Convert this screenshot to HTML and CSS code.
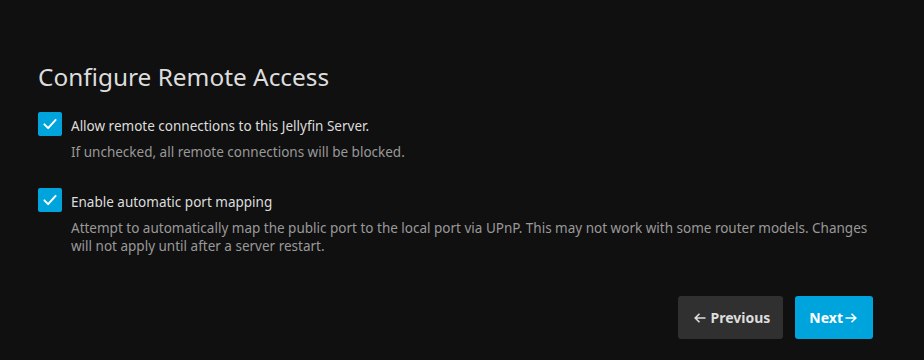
FILE: index.html
```html
<!DOCTYPE html>
<html lang="en">
<head>
    <meta charset="UTF-8">
    <title>Configure Remote Access</title>
    <link rel="stylesheet" href="styles.css">
</head>
<body>
    <div class="wizard">
        <h1>Configure Remote Access</h1>

        <div class="check-item">
            <label class="check-row">
                <span class="box">
                    <svg viewBox="0 0 24 24" width="18" height="18"><path d="M4.5 12.5l5 5 10-11" fill="none" stroke="#fff" stroke-width="2.6" stroke-linecap="round" stroke-linejoin="round"/></svg>
                </span>
                <span class="label">Allow remote connections to this Jellyfin Server.</span>
            </label>
            <div class="help">If unchecked, all remote connections will be blocked.</div>
        </div>

        <div class="check-item">
            <label class="check-row">
                <span class="box">
                    <svg viewBox="0 0 24 24" width="18" height="18"><path d="M4.5 12.5l5 5 10-11" fill="none" stroke="#fff" stroke-width="2.6" stroke-linecap="round" stroke-linejoin="round"/></svg>
                </span>
                <span class="label">Enable automatic port mapping</span>
            </label>
            <div class="help">Attempt to automatically map the public port to the local port via UPnP. This may not work with some router models. Changes will not apply until after a server restart.</div>
        </div>

        <div class="buttons">
            <button class="btn btn-prev">
                <svg class="arrow" viewBox="0 0 12 10" width="12" height="10"><path d="M11.5 5H1M5.5 0.8L1.2 5l4.3 4.2" fill="none" stroke="currentColor" stroke-width="1.6"/></svg>
                Previous
            </button>
            <button class="btn btn-next">
                Next
                <svg class="arrow" viewBox="0 0 12 10" width="12" height="10"><path d="M0.5 5H11M6.5 0.8L10.8 5l-4.3 4.2" fill="none" stroke="currentColor" stroke-width="1.6"/></svg>
            </button>
        </div>
    </div>
</body>
</html>
```

FILE: styles.css
```css
html, body {
    margin: 0;
    background: #101010;
    color: #ddd;
    font-family: "Noto Sans", sans-serif;
}

.wizard {
    padding: 60px 38px 0 38px;
}

h1 {
    margin: 0 0 19px 0;
    font-size: 24.4px;
    font-weight: 400;
    color: #ddd;
    line-height: 33px;
}

.check-item {
    margin-bottom: 27px;
}

.check-row {
    display: flex;
    align-items: center;
    gap: 9px;
    height: 24px;
}

.box {
    width: 24px;
    height: 24px;
    border-radius: 2px;
    background: #00a4dc;
    display: flex;
    align-items: center;
    justify-content: center;
}

.label {
    font-size: 13.5px;
    color: #ddd;
    padding-top: 3px;
}

.help {
    margin: 7px 0 0 33px;
    font-size: 13.5px;
    line-height: 18px;
    color: #999;
}

.buttons {
    display: flex;
    justify-content: flex-end;
    gap: 12px;
    margin-top: 41px;
    padding-right: 13px;
}

.btn {
    height: 43px;
    border: 0;
    border-radius: 3px;
    font-family: "Noto Sans", sans-serif;
    font-size: 14px;
    font-weight: 700;
    display: flex;
    align-items: center;
}

.btn-prev {
    background: #303030;
    color: #ddd;
    padding: 0 13px 0 16px;
    gap: 5px;
}

.btn-next {
    background: #00a4dc;
    color: #fff;
    padding: 0 16px 0 14px;
    gap: 2px;
}

.arrow {
    display: block;
}
```
